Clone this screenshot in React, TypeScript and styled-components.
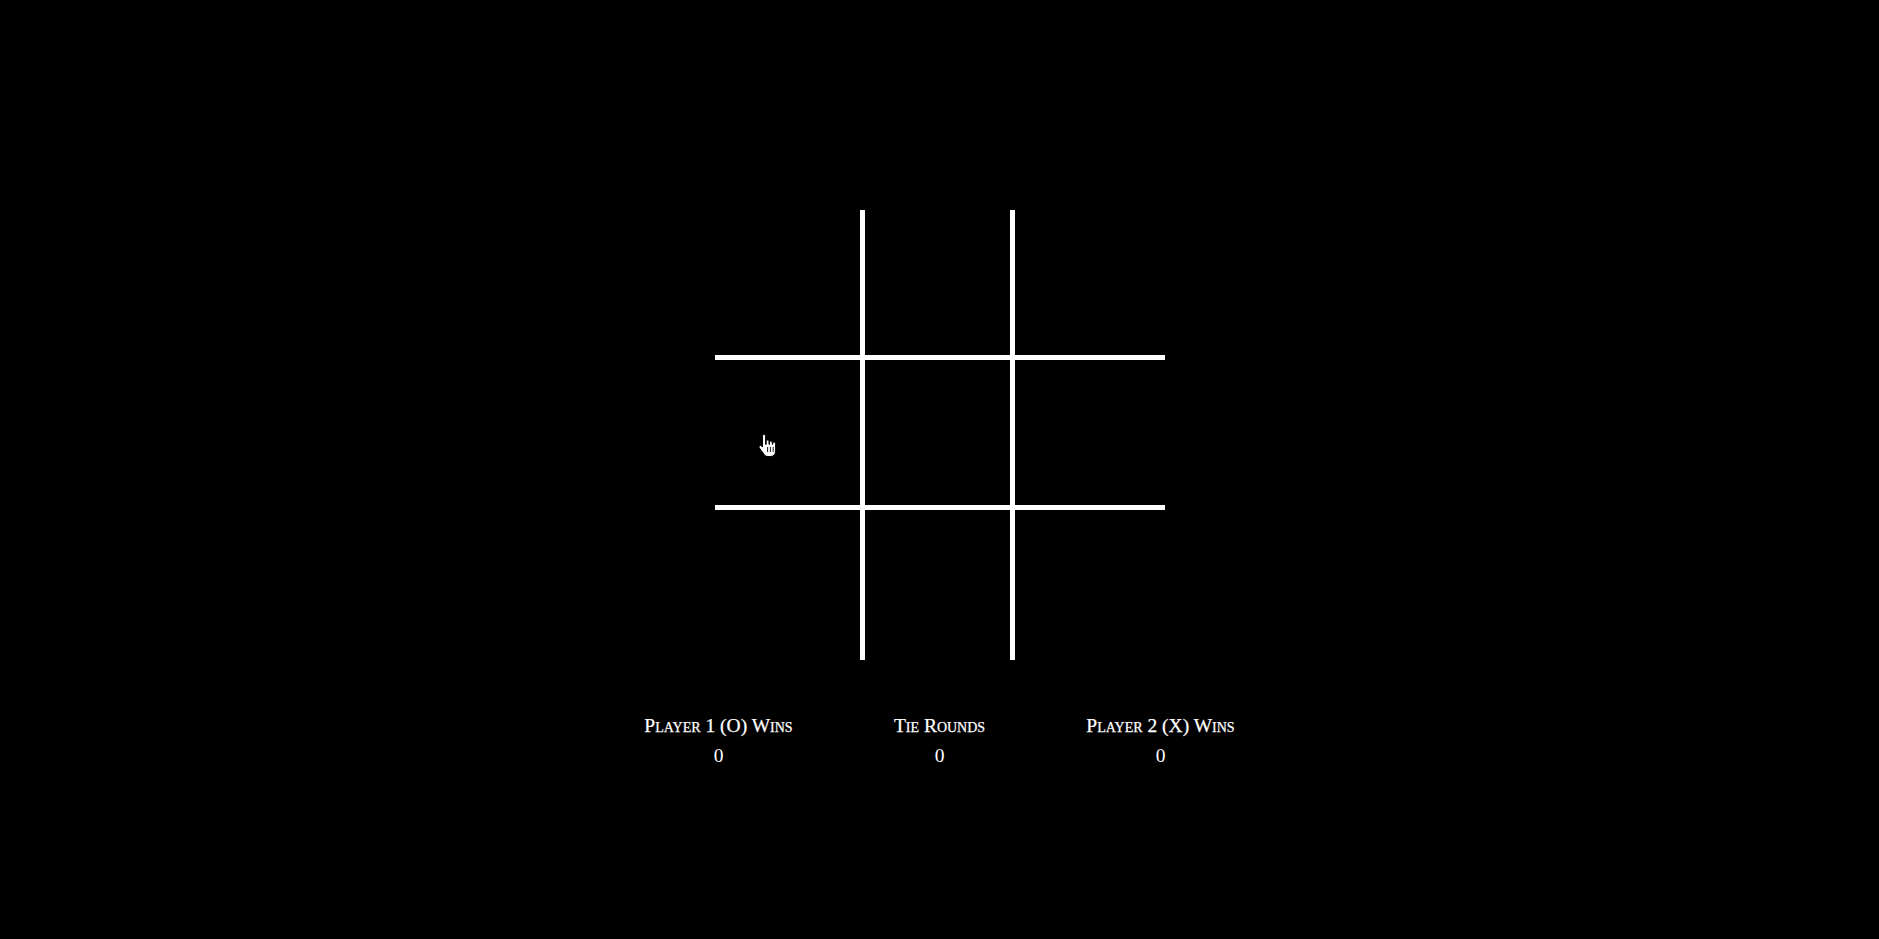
import React, { useState } from 'react';
import styled, { createGlobalStyle } from 'styled-components';

const GlobalStyle = createGlobalStyle`
    html, body {
        margin: 0;
        padding: 0;
        background: #000;
        color: #fff;
        font-family: "Liberation Serif", "DejaVu Serif", serif;
    }
`;

const Page = styled.main`
    display: flex;
    flex-direction: column;
    align-items: center;
    min-height: 939px;
    padding-top: 210px;
    box-sizing: border-box;
`;

const Board = styled.div`
    position: relative;
    display: grid;
    grid-template-columns: repeat(3, 150px);
    grid-template-rows: repeat(3, 150px);
`;

const Cell = styled.div<{ $right: boolean; $bottom: boolean }>`
    box-sizing: border-box;
    border-right: ${(p) => (p.$right ? '5px solid #fff' : 'none')};
    border-bottom: ${(p) => (p.$bottom ? '5px solid #fff' : 'none')};
    display: flex;
    align-items: center;
    justify-content: center;
    font-size: 96px;
    cursor: pointer;
`;

const Scores = styled.div`
    display: grid;
    grid-template-columns: repeat(3, 221px);
    margin-top: 53px;
    text-align: center;
`;

const Score = styled.div`
    display: flex;
    flex-direction: column;
    align-items: center;
    gap: 4px;
`;

const Label = styled.span`
    font-variant: small-caps;
    font-size: 19.5px;
    line-height: 26px;
    -webkit-text-stroke: 0.25px #fff;
`;

const Count = styled.span`
    font-size: 19.5px;
    line-height: 26px;
`;

const Pointer = styled.svg`
    position: absolute;
    left: 43px;
    top: 223px;
    pointer-events: none;
`;

const HandCursor = () => (
    <Pointer width="22" height="26" viewBox="0 0 22 26">
        <path
            d="M6 1.5c1 0 1.6.7 1.6 1.6v8.2h.6V8.6c0-.9.6-1.5 1.4-1.5s1.4.6 1.4 1.5v2.7h.5V9.6c0-.9.6-1.5 1.4-1.5s1.4.6 1.4 1.5v1.7h.5v-.6c0-.9.6-1.5 1.4-1.5s1.4.6 1.4 1.5v7.4c0 2.9-1.900 5.4-4.9 5.4H10c-1.8 0-3-.8-4-2.2L1.4 15c-.6-.9-.3-1.8.4-2.2.7-.4 1.5-.2 2.1.5l.6.8V3.1C4.5 2.2 5.1 1.5 6 1.5z"
            fill="#fff"
            stroke="#000"
            strokeWidth="1"
        />
        <path d="M9.6 14v5M12.4 14v5M15.2 14v5" stroke="#000" strokeWidth="0.9" />
    </Pointer>
);

const App = () => {
    const [board, setBoard] = useState<string[]>(Array(9).fill(''));
    const [turn, setTurn] = useState<'O' | 'X'>('O');

    const play = (i: number) => {
        if (board[i]) return;
        const next = [...board];
        next[i] = turn;
        setBoard(next);
        setTurn(turn === 'O' ? 'X' : 'O');
    };

    return (
        <>
            <GlobalStyle />
            <Page>
                <Board>
                    {board.map((mark, i) => (
                        <Cell
                            key={i}
                            $right={i % 3 !== 2}
                            $bottom={i < 6}
                            onClick={() => play(i)}
                        >
                            {mark}
                        </Cell>
                    ))}
                    <HandCursor />
                </Board>
                <Scores>
                    <Score>
                        <Label>Player 1 (O) Wins</Label>
                        <Count>0</Count>
                    </Score>
                    <Score>
                        <Label>Tie Rounds</Label>
                        <Count>0</Count>
                    </Score>
                    <Score>
                        <Label>Player 2 (X) Wins</Label>
                        <Count>0</Count>
                    </Score>
                </Scores>
            </Page>
        </>
    );
};

export default App;
